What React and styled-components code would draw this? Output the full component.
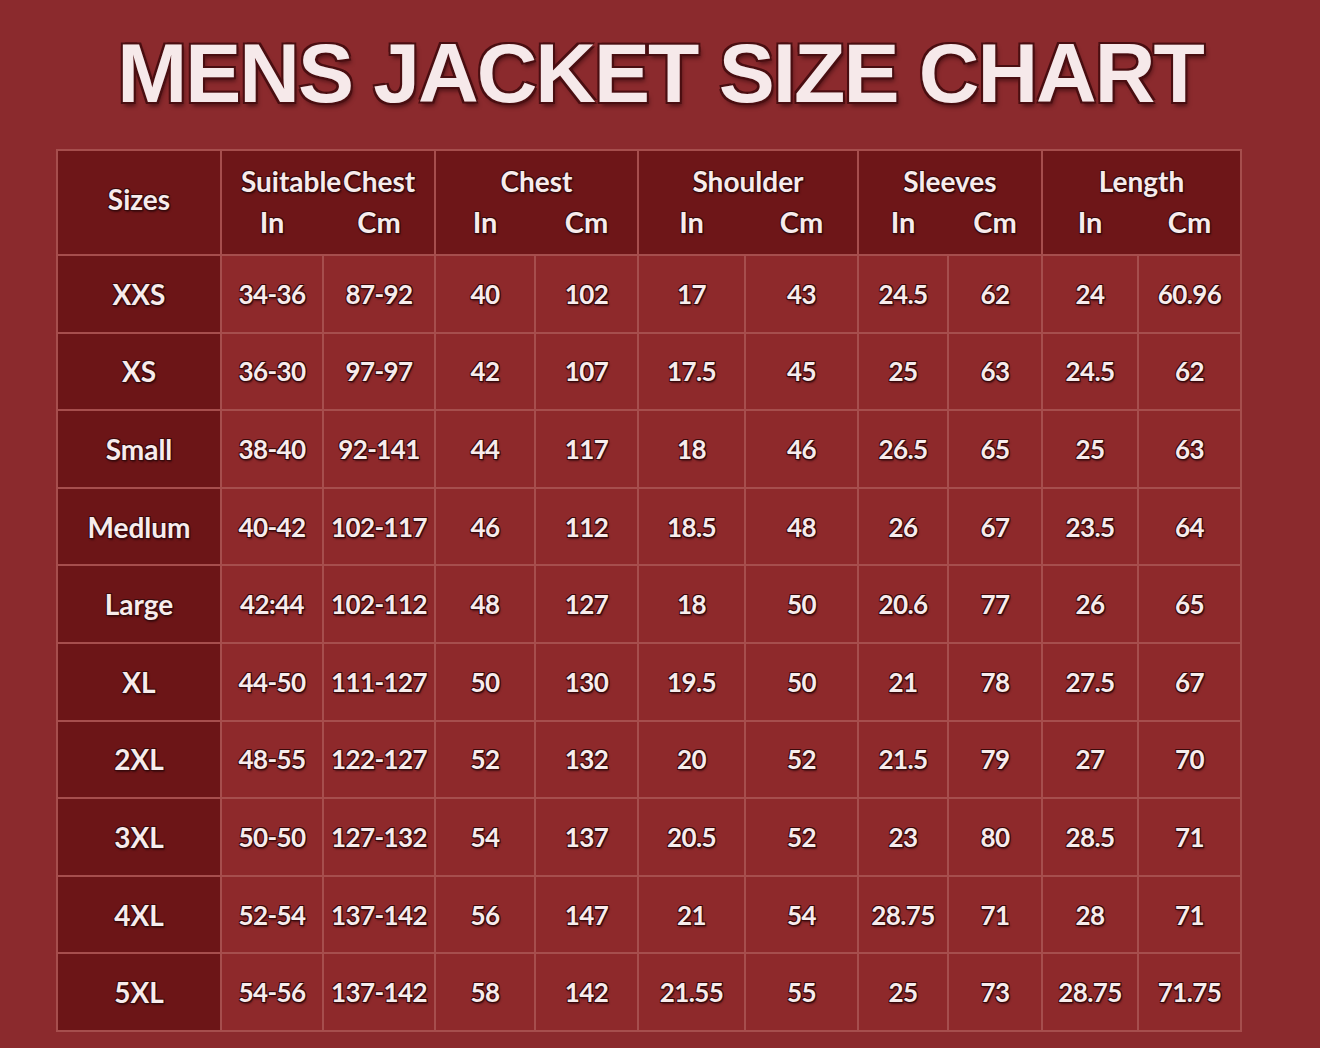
import React from "react";
import styled, { createGlobalStyle } from "styled-components";

const GlobalStyle = createGlobalStyle`
  html, body {
    margin: 0;
    padding: 0;
    background: #8b2a2d;
  }
  body {
    font-family: "Lato", "Noto Sans", sans-serif;
  }
`;

const groups = [
  { title: "Suitable Chest" },
  { title: "Chest" },
  { title: "Shoulder" },
  { title: "Sleeves" },
  { title: "Length" },
];

const rows = [
  ["XXS", "34-36", "87-92", "40", "102", "17", "43", "24.5", "62", "24", "60.96"],
  ["XS", "36-30", "97-97", "42", "107", "17.5", "45", "25", "63", "24.5", "62"],
  ["Small", "38-40", "92-141", "44", "117", "18", "46", "26.5", "65", "25", "63"],
  ["Medlum", "40-42", "102-117", "46", "112", "18.5", "48", "26", "67", "23.5", "64"],
  ["Large", "42:44", "102-112", "48", "127", "18", "50", "20.6", "77", "26", "65"],
  ["XL", "44-50", "111-127", "50", "130", "19.5", "50", "21", "78", "27.5", "67"],
  ["2XL", "48-55", "122-127", "52", "132", "20", "52", "21.5", "79", "27", "70"],
  ["3XL", "50-50", "127-132", "54", "137", "20.5", "52", "23", "80", "28.5", "71"],
  ["4XL", "52-54", "137-142", "56", "147", "21", "54", "28.75", "71", "28", "71"],
  ["5XL", "54-56", "137-142", "58", "142", "21.55", "55", "25", "73", "28.75", "71.75"],
];

export default function App() {
  return (
    <>
      <GlobalStyle />
      <Page>
        <Title>MENS JACKET SIZE CHART</Title>
        <Chart>
          <SizesHead>Sizes</SizesHead>
          {groups.map((g) => (
            <GroupHead key={g.title}>
              <GroupTitle>{g.title}</GroupTitle>
              <Unit>In</Unit>
              <Unit>Cm</Unit>
            </GroupHead>
          ))}
          {rows.map((r) =>
            r.map((v, i) =>
              i === 0 ? (
                <SizeCell key={r[0] + i}>{v}</SizeCell>
              ) : (
                <Cell key={r[0] + i}>{v}</Cell>
              )
            )
          )}
        </Chart>
      </Page>
    </>
  );
}

const outline = `
  text-shadow:
    1px 1px 0 #3a0a0c,
    -1px 1px 0 #3a0a0c,
    1px -1px 0 #3a0a0c,
    -1px -1px 0 #3a0a0c,
    1px 2px 2px rgba(40, 5, 8, 0.7);
`;

const Page = styled.div`
  width: 1320px;
  height: 1048px;
  overflow: hidden;
  box-sizing: border-box;
  padding-top: 31px;
  display: flex;
  flex-direction: column;
`;

const Title = styled.h1`
  margin: 0;
  text-align: center;
  font-family: "Liberation Sans", Arial, sans-serif;
  font-weight: 700;
  font-size: 84px;
  line-height: 84px;
  letter-spacing: -2px;
  color: #f6e9ea;
  text-shadow:
    2px 2px 0 #4a0e11,
    -2px 2px 0 #4a0e11,
    2px -2px 0 #4a0e11,
    -2px -2px 0 #4a0e11,
    2px 4px 4px rgba(40, 5, 8, 0.6);
`;

const Chart = styled.div`
  margin: 34px 0 0 56px;
  width: max-content;
  display: grid;
  grid-template-columns: 162px 100px 110px 98px 101px 105px 111px 88px 92px 94px 101px;
  grid-template-rows: 103px;
  grid-auto-rows: 75.6px;
  gap: 2px;
  padding: 2px;
  background: #a64e4d;
`;

const cellText = `
  display: flex;
  align-items: center;
  justify-content: center;
  color: #f7ecec;
  font-weight: 700;
  font-size: 26px;
  letter-spacing: -0.6px;
`;

const SizesHead = styled.div`
  ${cellText}
  ${outline}
  background: #6e1618;
  font-size: 28px;
  letter-spacing: 0;
  padding-bottom: 8px;
`;

const GroupHead = styled.div`
  grid-column: span 2;
  display: grid;
  grid-template-columns: subgrid;
  grid-template-rows: auto auto;
  align-content: center;
  row-gap: 6px;
  background: #6e1618;
  padding-bottom: 2px;
`;

const GroupTitle = styled.div`
  grid-column: span 2;
  text-align: center;
  color: #f7ecec;
  font-weight: 700;
  font-size: 28px;
  word-spacing: -5px;
  ${outline}
`;

const Unit = styled.div`
  text-align: center;
  color: #f7ecec;
  font-weight: 700;
  font-size: 29px;
  ${outline}
`;

const SizeCell = styled.div`
  ${cellText}
  ${outline}
  font-size: 28px;
  letter-spacing: 0;
  background: #6c1517;
`;

const Cell = styled.div`
  ${cellText}
  ${outline}
  background: #8e292b;
`;
